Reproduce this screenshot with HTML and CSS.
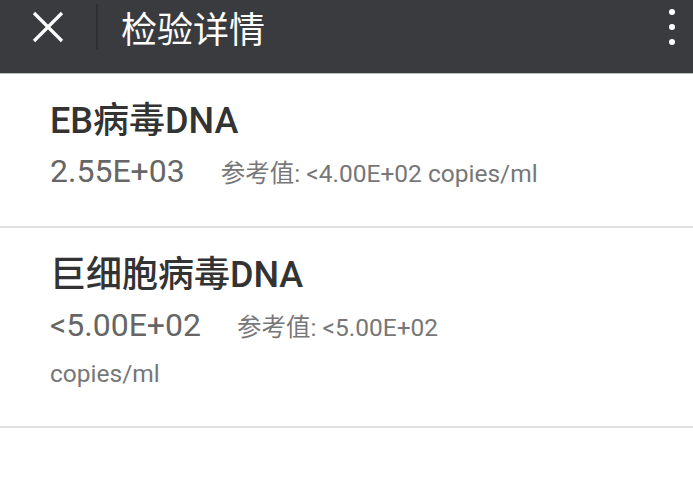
FILE: index.html
```html
<!DOCTYPE html>
<html lang="zh-CN">
  <head>
    <meta charset="UTF-8" />
    <meta name="viewport" content="width=device-width, initial-scale=1.0" />
    <title>检验详情</title>
    <link rel="stylesheet" href="styles.css">
  </head>
  <body>
    <header class="toolbar">
      <div class="toolbar-row">
        <button class="close-btn" type="button" aria-label="关闭">
          <svg width="32" height="32" viewBox="0 0 32 32">
            <path d="M2 2 L30 30 M30 2 L2 30" stroke="#ffffff" stroke-width="3.2" fill="none" />
          </svg>
        </button>
        <span class="toolbar-divider"></span>
        <h1 class="toolbar-title">检验详情</h1>
        <button class="more-btn" type="button" aria-label="更多">
          <span class="dot"></span>
          <span class="dot"></span>
          <span class="dot"></span>
        </button>
      </div>
    </header>

    <ul class="result-list">
      <li class="result-item">
        <div class="result-name">EB病毒DNA</div>
        <div class="result-detail">
          <span class="result-value">2.55E+03</span>
          <span class="result-ref">参考值: &lt;4.00E+02 copies/ml</span>
        </div>
      </li>
      <li class="result-item">
        <div class="result-name">巨细胞病毒DNA</div>
        <div class="result-detail">
          <span class="result-value">&lt;5.00E+02</span>
          <span class="result-ref">参考值: &lt;5.00E+02 copies/ml</span>
        </div>
      </li>
    </ul>
  </body>
</html>
```

FILE: styles.css
```css
body {
  font-family: Roboto, "Noto Sans CJK SC", sans-serif;
  background-color: #ffffff;
  margin: 0;
  padding: 0;
}

.toolbar {
  background-color: #3a3b3f;
  height: 73px;
  border-bottom: 1px solid #b9bfb9;
}

.toolbar-row {
  display: flex;
  align-items: center;
  height: 54px;
}

.close-btn {
  background: none;
  border: none;
  padding: 0;
  margin-left: 32px;
  width: 32px;
  height: 32px;
  display: flex;
}

.toolbar-divider {
  width: 2px;
  height: 46px;
  background-color: #2f3034;
  margin-left: 32px;
}

.toolbar-title {
  margin: 0 0 0 23px;
  font-size: 36px;
  font-weight: normal;
  color: #ffffff;
  flex: 1;
}

.more-btn {
  background: none;
  border: none;
  padding: 0;
  margin-right: 18px;
  display: flex;
  flex-direction: column;
  gap: 9px;
}

.dot {
  width: 6px;
  height: 6px;
  border-radius: 50%;
  background-color: #ffffff;
}

.result-list {
  list-style: none;
  margin: 0;
  padding: 0;
}

.result-item {
  padding: 24px 0 29px 50px;
  border-bottom: 2px solid #e2e2e2;
}

.result-name {
  font-size: 36px;
  line-height: 46px;
  font-weight: 500;
  color: #333333;
}

.result-detail {
  margin-top: 7px;
  max-width: 497px;
  font-size: 24.5px;
  line-height: 46px;
  color: #777777;
}

.result-value {
  font-size: 32px;
  line-height: 32px;
  color: #666666;
  margin-right: 30px;
}
```
